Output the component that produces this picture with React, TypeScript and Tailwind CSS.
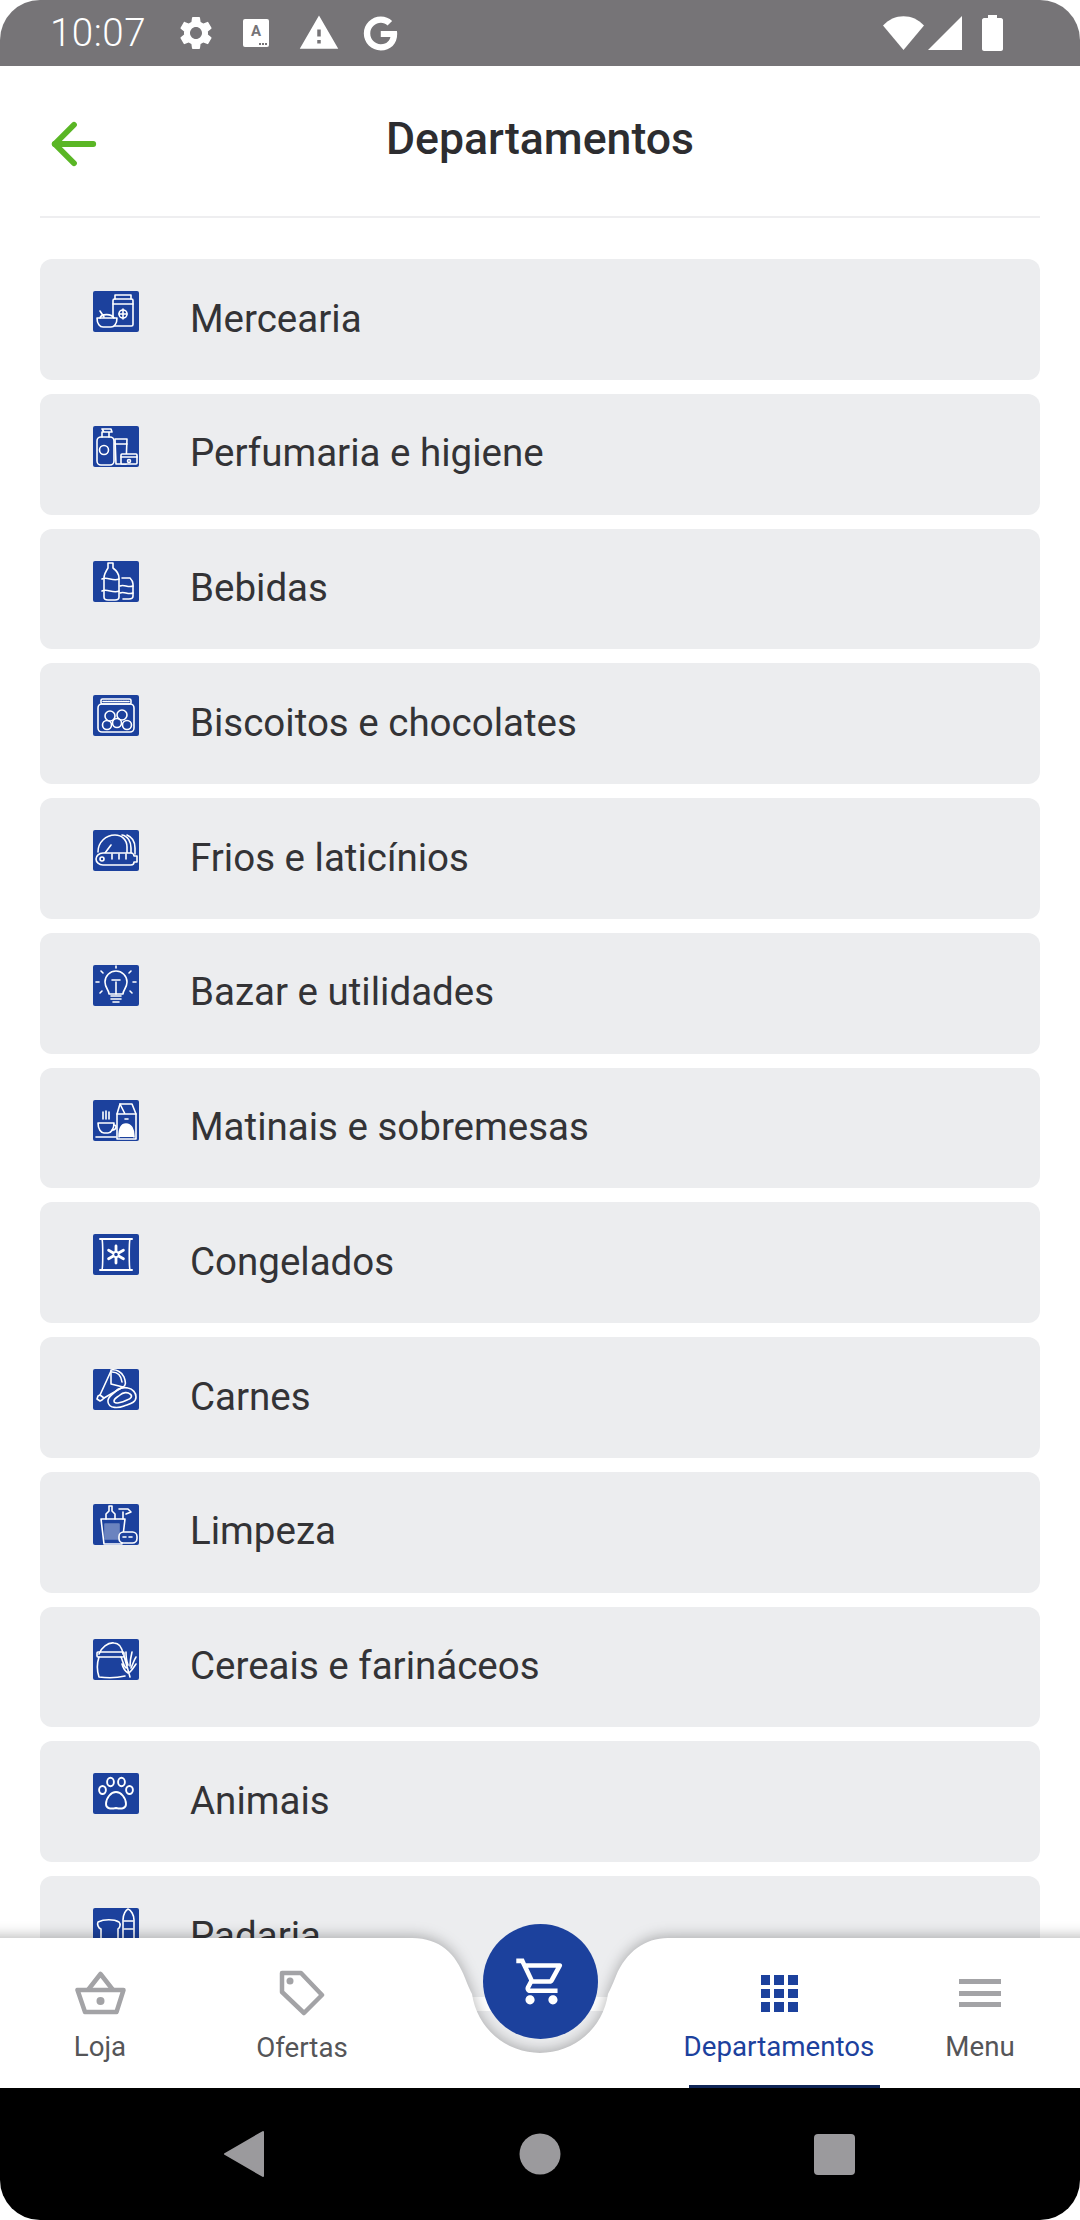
import { ReactNode } from "react";
import { MdSettings, MdWarning, MdOutlineShoppingCart } from "react-icons/md";
import { FaGoogle } from "react-icons/fa";
import { ArrowLeft } from "lucide-react";

const Glyph = ({ children }: { children: ReactNode }) => (
  <svg
    viewBox="0 0 46 41"
    className="w-[46px] h-[41px] shrink-0 rounded-[2px] bg-[#1c419d]"
    fill="none"
    stroke="#fff"
    strokeWidth="1.6"
    strokeLinejoin="round"
    strokeLinecap="round"
  >
    {children}
  </svg>
);

const departments: { name: string; icon: ReactNode }[] = [
  {
    name: "Mercearia",
    icon: (
      <>
        <rect x="20" y="8" width="20" height="27" rx="1.5" />
        <path d="M22 8V4h16v4M20 13h20" />
        <circle cx="30" cy="23" r="4" />
        <path d="M30 18v10M26 23h8" />
        <path d="M4 27h20c0 6-3 9-6 9h-8c-3 0-6-3-6-9z" fill="#1c419d" />
        <path d="M7 27c1-4 11-5 14 0M7 20l4 6" />
      </>
    ),
  },
  {
    name: "Perfumaria e higiene",
    icon: (
      <>
        <rect x="4" y="11" width="17" height="28" rx="4" />
        <path d="M9 11V6h7v5M9 3h9l1 3h-8z" />
        <circle cx="11" cy="24" r="4.5" />
        <path d="M22 13h12l-1 25H23z" />
        <path d="M22 18h12" />
        <rect x="28" y="28" width="16" height="10" rx="1" fill="#1c419d" />
        <path d="M28 31h16" />
        <circle cx="36" cy="35" r="1.5" />
      </>
    ),
  },
  {
    name: "Bebidas",
    icon: (
      <>
        <path d="M15 2h5v5c4 3 6 6 6 10v19c0 2-2 3-4 3h-7c-2 0-4-1-4-3V17c0-4 2-7 4-10z" />
        <path d="M9 18c5-3 11 3 17 0M9 30c5-3 11 3 17 0" />
        <path d="M29 17h8c2 2 3 4 3 6v12c0 2-2 3-4 3h-6" />
        <path d="M27 25c4-2 8 2 13 0M27 32c4-2 8 2 13 0" />
      </>
    ),
  },
  {
    name: "Biscoitos e chocolates",
    icon: (
      <>
        <rect x="8" y="4" width="30" height="5" rx="1.5" />
        <path d="M10 6.5h26" strokeDasharray="1.5 1" />
        <rect x="5" y="9" width="36" height="28" rx="4" />
        <circle cx="17" cy="21" r="5" />
        <circle cx="29" cy="20" r="5" />
        <circle cx="14" cy="30" r="4.5" />
        <circle cx="24" cy="28" r="4.5" />
        <circle cx="34" cy="30" r="4.5" />
      </>
    ),
  },
  {
    name: "Frios e laticínios",
    icon: (
      <>
        <path d="M5 22c0-10 8-17 17-17 7 0 12 5 12 12v7" />
        <path d="M29 5c6 1 9 7 9 13v5M34 5c5 2 8 7 8 13v6" />
        <path d="M18 15l-6 8" />
        <path d="M10 23h28c2 0 3 2 3 3h3v6h-3c0 2-1 3-3 3H10c-4 0-7-3-7-6s3-6 7-6z" fill="#1c419d" />
        <path d="M19 24v5M26 24v5M33 24v5" />
        <circle cx="9" cy="29" r="2" />
      </>
    ),
  },
  {
    name: "Bazar e utilidades",
    icon: (
      <>
        <path d="M16 29c0-4-4-6-4-12a11 11 0 0 1 22 0c0 6-4 8-4 12z" />
        <path d="M18 31h10M18 34h10M20 37h6" />
        <path d="M23 29V17M19 15h8" />
        <path d="M23 1v2M8 6l2 2M38 6l-2 2M3 17h3M40 17h3M7 28l2-2M39 28l-2-2" />
      </>
    ),
  },
  {
    name: "Matinais e sobremesas",
    icon: (
      <>
        <path d="M24 14l3-10h12l4 10v25H24z" />
        <path d="M27 4l5 10M24 14h19" />
        <path d="M26 37c0-8 2-13 7-13s8 5 8 13" fill="#fff" />
        <path d="M32 19h3" />
        <path d="M5 23h16c0 6-3 10-6 10H11c-3 0-6-4-6-10z" />
        <path d="M21 25c3 0 3 5-2 5M3 37h20M10 12v7M13 11v8M16 12v7" />
      </>
    ),
  },
  {
    name: "Congelados",
    icon: (
      <>
        <path d="M7 5h32M7 36h32" strokeWidth="2" />
        <path d="M9 5c1 3 1 28 0 31M37 5c-1 3-1 28 0 31" strokeWidth="1.6" />
        <g strokeWidth="2.8">
          <path d="M23 12v17M15.6 16.2l14.8 8.6M15.6 24.8l14.8-8.6" />
        </g>
        <circle cx="23" cy="20.5" r="2.6" fill="#1c419d" />
      </>
    ),
  },
  {
    name: "Carnes",
    icon: (
      <>
        <path d="M18 1c5-1 11 2 13 7s2 9-1 10L18 15z" />
        <path d="M19 3c5 0 9 3 10 10" />
        <path d="M18 2L7 26l4 3 19-11" />
        <path d="M7 26l-2 1-1 3 3 2 2-1 2-2" />
        <path d="M15 33c-1-5 4-7 7-10 3-4 9-5 13-4 5 1 8 5 8 9 0 6-7 7-12 9-5 2-15 3-16-4z" />
        <path d="M21 32c0-3 4-4 6-6 3-3 8-3 10-1 3 2 1 5-3 6-4 2-13 5-13 1z" />
      </>
    ),
  },
  {
    name: "Limpeza",
    icon: (
      <>
        <path d="M8 15h24l-3 25H11z" />
        <path d="M13 15v-5l3-3V2h3v5l3 3v5" />
        <rect x="12" y="20" width="14" height="15" fill="#fff" opacity=".35" />
        <path d="M26 5h9l3 3-5 2M30 8v7" />
        <rect x="26" y="28" width="18" height="11" rx="4.5" fill="#1c419d" />
        <path d="M30 33h3M36 33h3" />
      </>
    ),
  },
  {
    name: "Cereais e farináceos",
    icon: (
      <>
        <path d="M6 15c2-6 9-12 15-11 5 0 8 5 9 11" />
        <rect x="4" y="13" width="27" height="5" rx="1" />
        <path d="M6 18c-2 6-2 14 0 20 7 1 18 1 26-1" />
        <path d="M37 38L31 17M28 18c2 4 2 8 5 11M33 13c0 4 0 8 2 13M39 13c-1 4-2 8-2 14M43 18c-2 3-3 7-5 11M29 25c1 4 3 7 6 9M43 25c-2 3-4 6-6 8" />
      </>
    ),
  },
  {
    name: "Animais",
    icon: (
      <g strokeWidth="1.9">
        <path d="M13 31c0-6 5-12 10-12s10 6 10 12c0 5-5 5-10 4-5 1-10 1-10-4z" />
        <ellipse cx="9.5" cy="17" rx="3.4" ry="4" />
        <ellipse cx="17.5" cy="9" rx="3.4" ry="4.2" />
        <ellipse cx="28.5" cy="9" rx="3.4" ry="4.2" />
        <ellipse cx="36.5" cy="17" rx="3.4" ry="4" />
      </g>
    ),
  },
  {
    name: "Padaria",
    icon: (
      <>
        <path d="M30 40V12c0-6 3-10 5-11 3 1 6 6 6 11v28" />
        <path d="M31 13h9M31 21h9" />
        <path d="M5 14c6-3 16-3 21 0 2 2 1 6-1 7v12H8V21c-3-1-4-5-3-7z" />
      </>
    ),
  },
  { name: "", icon: <rect width="46" height="41" /> },
];

const navLabel = "text-[27.7px] leading-[34px] text-[#555558]";

const App = () => {
  return (
    <div className="relative h-[2220px] w-[1080px] flex flex-col overflow-hidden bg-white font-['Roboto',sans-serif]">
      {/* status bar */}
      <div className="h-[66px] shrink-0 bg-[#767477] rounded-t-[40px] flex items-center pl-[50px] pr-[77px] text-white">
        <span className="text-[38.5px] font-light tracking-[0.5px] w-[130px]">10:07</span>
        <MdSettings size={40} className="-ml-[4px]" />
        <div className="ml-[27px] w-[26px] h-[28px] bg-white rounded-[2px] relative flex justify-center text-[#767477] text-[15px] font-bold leading-[24px]">
          A
          <div className="absolute right-[2px] bottom-[2px] flex gap-[1px]">
            <i className="w-[2px] h-[2px] bg-[#767477]" />
            <i className="w-[2px] h-[2px] bg-[#767477]" />
            <i className="w-[2px] h-[2px] bg-[#767477]" />
          </div>
        </div>
        <MdWarning size={42} className="ml-[29px]" />
        <FaGoogle size={35} className="ml-[23px]" />
        <div className="ml-auto flex items-center gap-[4px]">
          <svg viewBox="0 0 41 34" className="w-[41px] h-[34px]" fill="#fff">
            <path d="M0 9.500C11 -3 30 -3 41 9.500L20.500 34z" />
          </svg>
          <svg viewBox="0 0 34 34" className="w-[34px] h-[34px]" fill="#fff">
            <path d="M34 0v34H0z" />
          </svg>
          <svg viewBox="0 0 21 36" className="ml-[16px] w-[21px] h-[36px]" fill="#fff">
            <path d="M6 0h9v3h4c1 0 2 1 2 2v29c0 1-1 2-2 2H2c-1 0-2-1-2-2V5c0-1 1-2 2-2h4z" />
          </svg>
        </div>
      </div>

      {/* header */}
      <header className="h-[152px] shrink-0 mx-[40px] border-b-2 border-[#eeeef0] relative flex items-center justify-center">
        <ArrowLeft size={66} strokeWidth={2.1} className="absolute left-[1px] top-[45px] text-[#5ab625]" />
        <h1 className="-mt-[4px] text-[44.6px] font-medium text-[#2d2d30]">Departamentos</h1>
      </header>

      {/* list runs on behind the bottom bar */}
      <main className="flex-1 overflow-hidden px-[40px] pt-[41px] flex flex-col gap-[14px]">
        {departments.map((d) => (
          <div key={d.name} className="h-[120.750px] shrink-0 bg-[#ecedef] rounded-[12px] flex items-center pl-[53px]">
            <div className="self-start mt-[32px]">
              <Glyph>{d.icon}</Glyph>
            </div>
            <span className="ml-[51px] text-[38.5px] -mt-[2px] text-[#333336]">{d.name}</span>
          </div>
        ))}
      </main>

      {/* android nav */}
      <div className="relative z-20 h-[132px] shrink-0 bg-white">
        <div className="h-full bg-black rounded-b-[40px] flex items-center justify-center">
          <svg viewBox="0 0 1080 132" className="w-[1080px] h-[132px]" fill="#9b9a9d">
            <path d="M225 66l38-22v44z" stroke="#9b9a9d" strokeWidth="2" strokeLinejoin="round" />
            <circle cx="540" cy="66" r="20.500" />
            <rect x="814" y="46" width="41" height="41" rx="4" />
          </svg>
        </div>
      </div>

      {/* bottom bar */}
      <nav className="absolute z-10 left-0 bottom-[132px] w-full h-[150px]">
        <svg viewBox="0 0 1080 150" className="absolute inset-0 w-full h-full overflow-visible drop-shadow-[0_-2px_7px_rgba(0,0,0,0.28)]" fill="#fff">
          <path d="M-20 0H412C440 0 456 16 465 40C469 50 470 52 472 56A68.700 68.700 0 0 0 608 56C610 52 612 48 616 38C626 14 645 0 668 0H1100V170H-20Z" />
        </svg>

        <div className="relative flex h-full">
          <div className="absolute left-[-20px] w-[240px] top-[33px] flex flex-col items-center">
            <svg viewBox="0 0 51 44" className="w-[51px] h-[44px]" fill="none" stroke="#a3a3a6" strokeWidth="4.500" strokeLinejoin="round">
              <path d="M2.500 19h46l-7 22H10z" />
              <path d="M13 19L25.500 3 38 19" />
              <circle cx="25.500" cy="30" r="4" fill="#a3a3a6" stroke="none" />
            </svg>
            <span className={`${navLabel} mt-[15px]`}>Loja</span>
          </div>
          <div className="absolute left-[182px] w-[240px] top-[32px] flex flex-col items-center">
            <svg viewBox="0 0 46 46" className="w-[46px] h-[46px]" fill="none" stroke="#a3a3a6" strokeWidth="4.500" strokeLinejoin="round">
              <path d="M3 3h19l21 22-18 18L3 22z" />
              <circle cx="11" cy="11" r="3.500" fill="#a3a3a6" stroke="none" />
            </svg>
            <span className={`${navLabel} mt-[15px]`}>Ofertas</span>
          </div>
          <div className="absolute left-[659px] w-[240px] top-[37px] flex flex-col items-center">
            <div className="grid grid-cols-3 gap-[4px] w-[37px] h-[37px]">
              {Array.from({ length: 9 }).map((_, i) => (
                <i key={i} className="bg-[#1c419d]" />
              ))}
            </div>
            <span className="text-[27.7px] leading-[34px] mt-[18px] text-[#1c419d]">Departamentos</span>
          </div>
          <div className="absolute left-[860px] w-[240px] top-[41px] flex flex-col items-center">
            <div className="w-[42px] h-[28px] flex flex-col justify-between">
              <i className="h-[5px] bg-[#a3a3a6]" />
              <i className="h-[5px] bg-[#a3a3a6]" />
              <i className="h-[5px] bg-[#a3a3a6]" />
            </div>
            <span className={`${navLabel} mt-[23px]`}>Menu</span>
          </div>
          <div className="absolute left-[689px] bottom-0 w-[191px] h-[3px] bg-[#0f2557]" />
        </div>

        <div className="absolute left-[483px] top-[-14px] w-[115px] h-[115px] rounded-full bg-[#1c419d] flex items-center justify-center text-white">
          <MdOutlineShoppingCart size={55} className="ml-[2px]" />
        </div>
      </nav>
    </div>
  );
};

export default App;
